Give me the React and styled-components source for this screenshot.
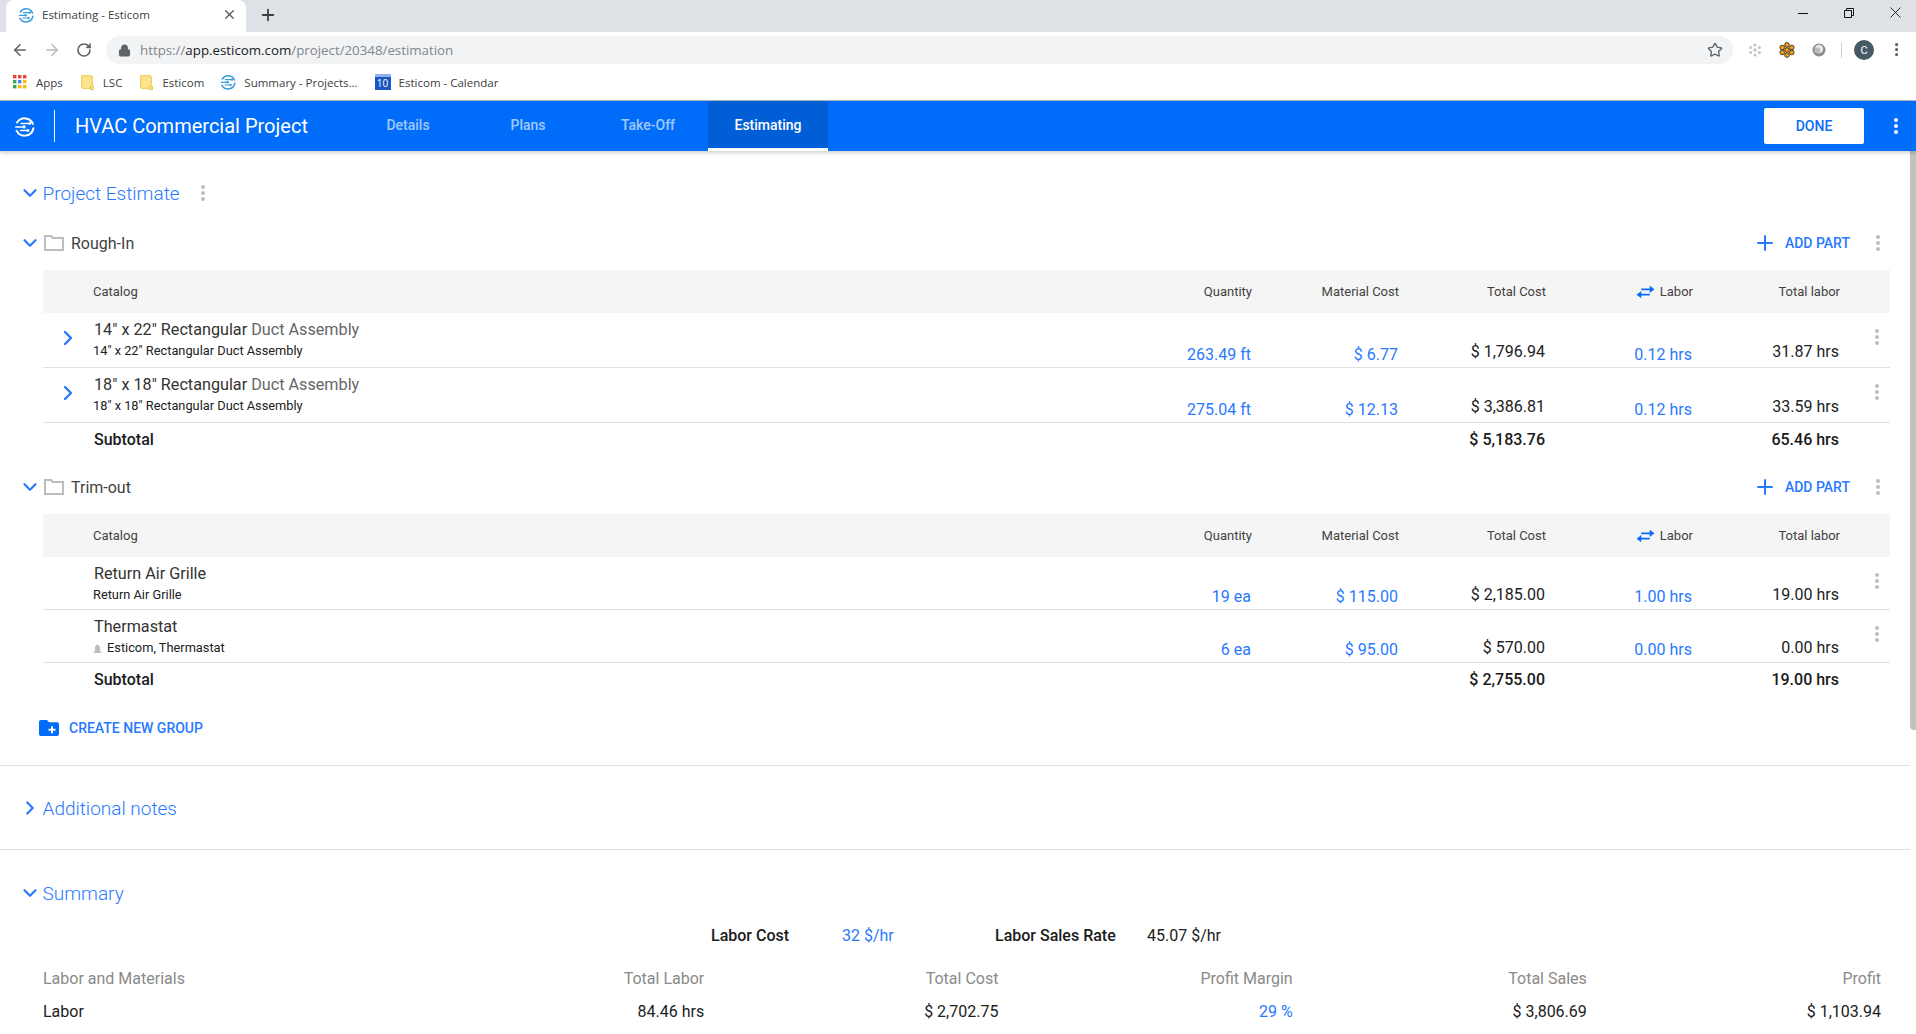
import React from 'react';
import styled, { createGlobalStyle } from 'styled-components';
import { ArrowLeft, ArrowRight, ChevronDown, ChevronRight, Lock, Plus, RotateCw, Star, X } from 'lucide-react';

const BLUE = '#2979ff';

const GlobalStyle = createGlobalStyle`
  html, body {
    margin: 0;
    padding: 0;
    height: 100%;
    overflow: hidden;
    background: #fff;
    font-family: Roboto, "Liberation Sans", sans-serif;
  }
  * { box-sizing: border-box; }
`;

const Page = styled.div`
  width: 1916px;
  height: 1034px;
  display: flex;
  flex-direction: column;
  overflow: hidden;
`;

/* browser chrome */
const TabStrip = styled.div`
  height: 32px;
  flex: none;
  background: #dee1e6;
  display: flex;
  padding-left: 6px;
`;

const BrowserTab = styled.div`
  width: 240px;
  background: #fff;
  border-radius: 8px 8px 0 0;
  display: flex;
  align-items: center;
  padding: 0 9px 3px 12px;
  gap: 8px;
  font-family: "Open Sans", sans-serif;
  font-size: 11.5px;
  color: #3c4043;
`;

const TabTitle = styled.span`
  flex: 1;
`;

const NewTab = styled.div`
  width: 44px;
  display: flex;
  align-items: center;
  justify-content: center;
  padding-bottom: 3px;
  color: #3c4043;
`;

const WindowControls = styled.div`
  margin-left: auto;
  margin-right: -2px;
  display: flex;
`;

const WindowButton = styled.div`
  width: 46px;
  display: flex;
  align-items: center;
  justify-content: center;
  height: 25px;
`;

const Toolbar = styled.div`
  height: 36px;
  flex: none;
  display: flex;
  align-items: center;
  padding-left: 4px;
`;

const NavButton = styled.div`
  width: 32px;
  display: flex;
  justify-content: center;
  color: ${p => (p.$off ? '#b9bbbe' : '#5f6368')};
`;

const Omnibox = styled.div`
  width: 1627px;
  height: 28px;
  margin-left: 6px;
  border-radius: 14px;
  background: #f1f3f4;
  display: flex;
  align-items: center;
  padding: 0 10px 0 12px;
  color: #5f6368;
  font-family: "Open Sans", sans-serif;
  font-size: 13.3px;
`;

const Url = styled.span`
  margin-left: 9px;
  flex: 1;
  color: #80868b;
  b { font-weight: 400; color: #202124; }
`;

const ExtSlot = styled.div`
  width: 32px;
  display: flex;
  justify-content: center;
`;

const Extensions = styled.div`
  margin-left: 6px;
  display: flex;
  align-items: center;
`;

const ToolbarRule = styled.div`
  width: 1px;
  height: 16px;
  background: #cfd1d4;
  margin: 0 12px 0 6px;
`;

const Avatar = styled.div`
  width: 20px;
  height: 20px;
  border-radius: 50%;
  background: #455a64;
  color: #fff;
  font-size: 11px;
  display: flex;
  align-items: center;
  justify-content: center;
  margin-right: 21px;
`;

const Bookmarks = styled.div`
  height: 33px;
  flex: none;
  display: flex;
  align-items: center;
  padding: 0 0 4px 13px;
  border-bottom: 1px solid #b4b6b8;
  font-family: "Open Sans", sans-serif;
  font-size: 11.5px;
  color: #3c4043;
`;

const Bookmark = styled.div`
  display: flex;
  align-items: center;
  gap: ${p => p.$gap || 9}px;
  margin-right: ${p => p.$after || 18}px;
`;

const CalendarIcon = styled.div`
  width: 16px;
  height: 16px;
  background: #1a56c4;
  border-top: 3px solid #8fb0ea;
  color: #fff;
  font-size: 10px;
  line-height: 13px;
  text-align: center;
`;

/* app bar */
const AppBar = styled.header`
  height: 50px;
  flex: none;
  background: #006cfa;
  display: flex;
  align-items: stretch;
  padding: 0 18px 0 14px;
  box-shadow: 0 2px 4px rgba(0, 0, 0, 0.18);
  position: relative;
  z-index: 1;
`;

const LogoSlot = styled.div`
  display: flex;
  align-items: center;
`;

const BarRule = styled.div`
  width: 1px;
  height: 32px;
  background: #fff;
  align-self: center;
  margin: 0 20px 0 19px;
`;

const ProjectName = styled.div`
  flex: 0 0 273px;
  align-self: center;
  color: #fff;
  font-size: 20px;
  font-weight: 400;
  white-space: nowrap;
`;

const NavTab = styled.div`
  width: 120px;
  display: flex;
  align-items: center;
  justify-content: center;
  font-size: 14px;
  font-weight: 500;
  color: ${p => (p.$active ? '#fff' : 'rgba(255, 255, 255, 0.65)')};
  background: ${p => (p.$active ? '#005ed6' : 'transparent')};
  border-bottom: 3px solid ${p => (p.$active ? '#fff' : 'transparent')};
  padding-top: 1px;
`;

const DoneButton = styled.button`
  margin: 7px 30px 7px auto;
  width: 100px;
  border: none;
  border-radius: 2px;
  background: #fff;
  color: #0a6cf5;
  font-family: inherit;
  font-size: 14px;
  font-weight: 500;
`;

const KebabSlot = styled.div`
  display: flex;
  align-items: center;
`;

/* page body */
const Body = styled.div`
  flex: 1;
  display: flex;
  min-height: 0;
`;

const Main = styled.main`
  width: 1910px;
  overflow: hidden;
`;

const ScrollTrack = styled.div`
  width: 6px;
`;

const ScrollThumb = styled.div`
  height: 579px;
  background: #c1c1c1;
  border-radius: 0 0 0 4px;
`;

const SectionHead = styled.div`
  height: 40px;
  display: flex;
  align-items: center;
  padding-left: 19px;
  color: ${BLUE};
`;

const SectionTitle = styled.h2`
  margin: 0 21px 0 1.5px;
  font-size: 19px;
  font-weight: 300;
`;

const Estimate = styled.section`
  padding-top: 22px;
`;

const Group = styled.div`
  margin-top: ${p => p.$first ? 10 : 12}px;
`;

const GroupHead = styled.div`
  height: 40px;
  margin-bottom: 7px;
  display: flex;
  align-items: center;
  padding: 0 30px 0 19px;
`;

const ChevronSlot = styled.div`
  width: 22px;
  display: flex;
  color: ${BLUE};
`;

const FolderSlot = styled.div`
  margin: 0 7px 0 3px;
  display: flex;
`;

const GroupName = styled.span`
  font-size: 16px;
  color: #424242;
`;

const AddPart = styled.div`
  margin-left: auto;
  margin-right: 26px;
  display: flex;
  align-items: center;
  gap: 8px;
  color: ${BLUE};
  font-size: 14px;
  font-weight: 500;
`;

const Table = styled.div`
  margin: 0 20px 0 43px;
`;

const columns = 'grid-template-columns: 50px 1fr repeat(5, 147px) 50px;';

const TableHead = styled.div`
  display: grid;
  ${columns}
  height: 43px;
  background: #f5f5f5;
  align-items: center;
  font-size: 13px;
  color: #424242;
`;

const HeadCell = styled.div`
  display: flex;
  justify-content: ${p => (p.$left ? 'flex-start' : 'flex-end')};
  align-items: center;
  gap: 5px;
  white-space: nowrap;
`;

const Row = styled.div`
  display: grid;
  ${columns}
  height: ${p => p.$height}px;
  border-bottom: 1px solid #e0e0e0;
`;

const ExpandCell = styled.div`
  display: flex;
  justify-content: center;
  padding-top: 13px;
  color: ${BLUE};
`;

const NameCell = styled.div`
  padding-top: 7px;
`;

const PartName = styled.div`
  padding-left: 1px;
  font-size: 16.2px;
  line-height: 20px;
  color: #333;
`;

const Faded = styled.span`
  color: #666;
`;

const PartCode = styled.div`
  margin-top: 3px;
  font-size: 12.8px;
  line-height: 16px;
  color: #212121;
  display: flex;
  align-items: center;
  gap: 5px;
`;

const ValueCell = styled.div`
  align-self: end;
  text-align: right;
  font-size: 16px;
  line-height: 20px;
  padding-right: 1px;
  padding-bottom: ${p => p.$bottom}px;
  color: ${p => (p.$link ? BLUE : '#212121')};
`;

const RowMenu = styled.div`
  display: flex;
  justify-content: flex-end;
  padding: 16px 11px 0 0;
`;

const SubtotalRow = styled.div`
  display: grid;
  ${columns}
  height: 32px;
  align-items: center;
  font-size: 16px;
  font-weight: 500;
  color: #1a1a1a;
`;

const SubtotalLabel = styled.div`
  grid-column: 2;
  padding-left: 1px;
`;

const SubtotalValue = styled.div`
  grid-column: ${p => p.$col};
  text-align: right;
  padding-right: 1px;
`;

const CreateGroup = styled.div`
  margin: 17px 0 21px 39px;
  height: 32px;
  display: flex;
  align-items: center;
  gap: 10px;
  color: ${BLUE};
  font-size: 14px;
  font-weight: 500;
`;

const Rule = styled.hr`
  margin: 0;
  border: none;
  height: 1px;
  background: #e0e0e0;
`;

const Notes = styled.section`
  padding: 22px 0 21px;
`;

const Summary = styled.section`
  padding-top: 23px;
`;

const RateRow = styled.div`
  margin: 13px 0 23px 711px;
  display: flex;
  font-size: 16px;
  line-height: 20px;
`;

const RateLabel = styled.span`
  font-weight: 500;
  color: #1a1a1a;
  width: ${p => p.$width}px;
`;

const RateValue = styled.span`
  color: ${p => (p.$link ? BLUE : '#212121')};
  width: ${p => p.$width}px;
`;

const SummaryGrid = styled.div`
  margin: 0 29px 0 43px;
  display: grid;
  grid-template-columns: 1fr repeat(5, 294.2px);
  row-gap: 13px;
  font-size: 16px;
  line-height: 20px;
`;

const SummaryHead = styled.div`
  color: #8a8a8a;
  text-align: ${p => (p.$left ? 'left' : 'right')};
`;

const SummaryCell = styled.div`
  color: ${p => (p.$link ? BLUE : '#212121')};
  text-align: ${p => (p.$left ? 'left' : 'right')};
`;

/* drawings */
const EsticomLogo = ({ size = 16, color = '#3a9bdc' }) => (
  <svg width={size} height={size} viewBox="0 0 24 24" fill="none" stroke={color} strokeWidth="2.3" strokeLinecap="round">
    <path d="M3.5 7.5A10.3 10.3 0 0 1 21.7 9" />
    <path d="M22.2 14A10.3 10.3 0 0 1 3 17" />
    <path d="M8 8.5h9M2 12.5h9M7.5 16.5h8" strokeWidth="1.8" />
    <circle cx="18" cy="8.5" r="1.7" fill={color} stroke="none" />
    <circle cx="11.5" cy="12.5" r="1.9" fill={color} stroke="none" />
    <circle cx="16" cy="16.5" r="1.7" fill={color} stroke="none" />
  </svg>
);

const Kebab = ({ color = '#bdbdbd', r = 2, step = 6 }) => (
  <svg width={r * 2} height={step * 2 + r * 2} viewBox={`0 0 ${r * 2} ${step * 2 + r * 2}`} fill={color}>
    <circle cx={r} cy={r} r={r} />
    <circle cx={r} cy={r + step} r={r} />
    <circle cx={r} cy={r + step * 2} r={r} />
  </svg>
);

const AppsIcon = () => {
  const colors = ['#ea4335', '#ea4335', '#ea4335', '#34a853', '#4285f4', '#fbbc05', '#34a853', '#fbbc05', '#fbbc05'];
  return (
    <svg width="14" height="14" viewBox="0 0 14 14">
      {colors.map((c, i) => (
        <rect key={i} x={(i % 3) * 5} y={Math.floor(i / 3) * 5} width="3.4" height="3.4" fill={c} />
      ))}
    </svg>
  );
};

const BookmarkFolder = () => (
  <svg width="13" height="15" viewBox="0 0 13 15">
    <path d="M.7.7h9.6c.6 0 1 .4 1 1v11.6H1.7c-.6 0-1-.4-1-1z" fill="#fde58f" stroke="#eec549" strokeWidth="1" />
    <path d="M9.5 11.5h3v3h-3z" fill="#fde58f" stroke="#eec549" strokeWidth="1" />
  </svg>
);

const SnowExt = () => (
  <svg width="16" height="16" viewBox="0 0 16 16" fill="#c4c7ca">
    <circle cx="8" cy="8" r="1.8" />
    <circle cx="8" cy="3" r="1.6" />
    <circle cx="8" cy="13" r="1.6" />
    <circle cx="3.6" cy="5.5" r="1.6" />
    <circle cx="12.4" cy="5.5" r="1.6" />
    <circle cx="3.6" cy="10.5" r="1.6" />
    <circle cx="12.4" cy="10.5" r="1.6" />
  </svg>
);

const FlowerExt = () => (
  <svg width="16" height="16" viewBox="0 0 16 16" fill="#f6a21e" stroke="#3a2a10" strokeWidth=".9">
    <circle cx="8" cy="8" r="2.3" />
    <circle cx="8" cy="2.9" r="2.3" />
    <circle cx="8" cy="13.1" r="2.3" />
    <circle cx="3.2" cy="5.5" r="2.3" />
    <circle cx="12.8" cy="5.5" r="2.3" />
    <circle cx="3.2" cy="10.5" r="2.3" />
    <circle cx="12.8" cy="10.5" r="2.3" />
  </svg>
);

const BallExt = () => (
  <svg width="14" height="14" viewBox="0 0 14 14">
    <circle cx="7" cy="7" r="6.5" fill="#8a8c8e" />
    <circle cx="7" cy="6" r="4.2" fill="#e9e9e9" />
    <circle cx="5.2" cy="7.5" r="3" fill="#bbb" />
  </svg>
);

const Minimize = () => (
  <svg width="10" height="10" viewBox="0 0 10 10"><path d="M0 5.5h10" stroke="#111" /></svg>
);

const Restore = () => (
  <svg width="10" height="10" viewBox="0 0 10 10" fill="none" stroke="#111">
    <path d="M.5 2.5h7v7h-7zM2.5 2.5v-2h7v7h-2" />
  </svg>
);

const CloseWin = () => (
  <svg width="11" height="11" viewBox="0 0 11 11" stroke="#111" strokeWidth=".9"><path d="M.5.5l10 10M10.5.5l-10 10" /></svg>
);

const FolderOutline = () => (
  <svg width="20" height="16" viewBox="0 0 20 16" fill="none" stroke="#bdbdbd" strokeWidth="2">
    <path d="M1 1h6.2l1.6 2H19v12H1z" />
  </svg>
);

const FolderPlus = () => (
  <svg width="20" height="16" viewBox="0 0 20 16">
    <path d="M2 0h6l2 2.2h8a2 2 0 0 1 2 2V14a2 2 0 0 1-2 2H2a2 2 0 0 1-2-2V2a2 2 0 0 1 2-2z" fill="#006cfa" />
    <path d="M13 6.2v7M9.5 9.7h7" stroke="#fff" strokeWidth="2" />
  </svg>
);

const SwapIcon = () => (
  <svg width="19" height="14" viewBox="0 0 18 13" fill="#0a6cf5">
    <path d="M5 3.2h8V.5L17.5 4 13 7.5V4.8H5z" />
    <path d="M13 8.2H5V5.5L.5 9 5 12.5V9.8h8z" />
  </svg>
);

const BrandDot = () => (
  <svg width="9" height="9" viewBox="0 0 9 9" fill="#bdbdbd"><path d="M4.5 0L7 3v4l2 2H0l2-2V3z" /></svg>
);

const groups = [
  {
    name: 'Rough-In',
    rowHeight: 55,
    totalBottom: 5,
    subtotal: ['$ 5,183.76', '65.46 hrs'],
    rows: [
      { title: '14" x 22" Rectangular', fade: ' Duct Assembly', code: '14" x 22" Rectangular Duct Assembly', qty: '263.49 ft', material: '$ 6.77', total: '$ 1,796.94', labor: '0.12 hrs', totalLabor: '31.87 hrs', expand: true },
      { title: '18" x 18" Rectangular', fade: ' Duct Assembly', code: '18" x 18" Rectangular Duct Assembly', qty: '275.04 ft', material: '$ 12.13', total: '$ 3,386.81', labor: '0.12 hrs', totalLabor: '33.59 hrs', expand: true },
    ],
  },
  {
    name: 'Trim-out',
    rowHeight: 53,
    totalBottom: 4,
    subtotal: ['$ 2,755.00', '19.00 hrs'],
    rows: [
      { title: 'Return Air Grille', code: 'Return Air Grille', qty: '19 ea', material: '$ 115.00', total: '$ 2,185.00', labor: '1.00 hrs', totalLabor: '19.00 hrs' },
      { title: 'Thermastat', code: 'Esticom, Thermastat', brand: true, qty: '6 ea', material: '$ 95.00', total: '$ 570.00', labor: '0.00 hrs', totalLabor: '0.00 hrs' },
    ],
  },
];

const summaryHead = ['Labor and Materials', 'Total Labor', 'Total Cost', 'Profit Margin', 'Total Sales', 'Profit'];

const PartRow = ({ row, height, totalBottom }) => (
  <Row $height={height}>
    <ExpandCell>{row.expand && <ChevronRight size={24} strokeWidth={2.4} />}</ExpandCell>
    <NameCell>
      <PartName>{row.title}{row.fade && <Faded>{row.fade}</Faded>}</PartName>
      <PartCode>{row.brand && <BrandDot />}{row.code}</PartCode>
    </NameCell>
    <ValueCell $link $bottom={2}>{row.qty}</ValueCell>
    <ValueCell $link $bottom={2}>{row.material}</ValueCell>
    <ValueCell $bottom={totalBottom}>{row.total}</ValueCell>
    <ValueCell $link $bottom={2}>{row.labor}</ValueCell>
    <ValueCell $bottom={totalBottom}>{row.totalLabor}</ValueCell>
    <RowMenu><Kebab /></RowMenu>
  </Row>
);

const PartGroup = ({ group, first }) => (
  <Group $first={first}>
    <GroupHead>
      <ChevronSlot><ChevronDown size={22} strokeWidth={2.4} /></ChevronSlot>
      <FolderSlot><FolderOutline /></FolderSlot>
      <GroupName>{group.name}</GroupName>
      <AddPart><Plus size={24} strokeWidth={2} />ADD PART</AddPart>
      <KebabSlot><Kebab /></KebabSlot>
    </GroupHead>
    <Table>
      <TableHead>
        <span />
        <HeadCell $left>Catalog</HeadCell>
        <HeadCell>Quantity</HeadCell>
        <HeadCell>Material Cost</HeadCell>
        <HeadCell>Total Cost</HeadCell>
        <HeadCell><SwapIcon />Labor</HeadCell>
        <HeadCell>Total labor</HeadCell>
      </TableHead>
      {group.rows.map(row => (
        <PartRow key={row.title} row={row} height={group.rowHeight} totalBottom={group.totalBottom} />
      ))}
      <SubtotalRow>
        <SubtotalLabel>Subtotal</SubtotalLabel>
        <SubtotalValue $col={5}>{group.subtotal[0]}</SubtotalValue>
        <SubtotalValue $col={7}>{group.subtotal[1]}</SubtotalValue>
      </SubtotalRow>
    </Table>
  </Group>
);

const App = () => (
  <Page>
    <GlobalStyle />
    <TabStrip>
      <BrowserTab>
        <EsticomLogo />
        <TabTitle>Estimating - Esticom</TabTitle>
        <X size={15} strokeWidth={2.4} color="#5f6368" />
      </BrowserTab>
      <NewTab><Plus size={18} strokeWidth={2.4} /></NewTab>
      <WindowControls>
        <WindowButton><Minimize /></WindowButton>
        <WindowButton><Restore /></WindowButton>
        <WindowButton><CloseWin /></WindowButton>
      </WindowControls>
    </TabStrip>
    <Toolbar>
      <NavButton><ArrowLeft size={18} strokeWidth={2.2} /></NavButton>
      <NavButton $off><ArrowRight size={18} strokeWidth={2.2} /></NavButton>
      <NavButton><RotateCw size={16} strokeWidth={2.4} /></NavButton>
      <Omnibox>
        <Lock size={13} strokeWidth={2.4} fill="#5f6368" />
        <Url>https://<b>app.esticom.com</b>/project/20348/estimation</Url>
        <Star size={16} strokeWidth={2} />
      </Omnibox>
      <Extensions>
        <ExtSlot><SnowExt /></ExtSlot>
        <ExtSlot><FlowerExt /></ExtSlot>
        <ExtSlot><BallExt /></ExtSlot>
        <ToolbarRule />
        <Avatar>C</Avatar>
        <Kebab color="#5f6368" r={1.6} step={5} />
      </Extensions>
    </Toolbar>
    <Bookmarks>
      <Bookmark $after={18}><AppsIcon />Apps</Bookmark>
      <Bookmark $after={18}><BookmarkFolder />LSC</Bookmark>
      <Bookmark $after={16}><BookmarkFolder />Esticom</Bookmark>
      <Bookmark $gap={8} $after={17}><EsticomLogo />Summary - Projects...</Bookmark>
      <Bookmark $gap={8}><CalendarIcon>10</CalendarIcon>Esticom - Calendar</Bookmark>
    </Bookmarks>
    <AppBar>
      <LogoSlot><EsticomLogo size={21} color="#fff" /></LogoSlot>
      <BarRule />
      <ProjectName>HVAC Commercial Project</ProjectName>
      <NavTab>Details</NavTab>
      <NavTab>Plans</NavTab>
      <NavTab>Take-Off</NavTab>
      <NavTab $active>Estimating</NavTab>
      <DoneButton>DONE</DoneButton>
      <KebabSlot><Kebab color="#fff" /></KebabSlot>
    </AppBar>
    <Body>
      <Main>
        <Estimate>
          <SectionHead>
            <ChevronDown size={22} strokeWidth={2.4} />
            <SectionTitle>Project Estimate</SectionTitle>
            <Kebab />
          </SectionHead>
          {groups.map((g, i) => <PartGroup key={g.name} group={g} first={i === 0} />)}
          <CreateGroup><FolderPlus />CREATE NEW GROUP</CreateGroup>
        </Estimate>
        <Rule />
        <Notes>
          <SectionHead>
            <ChevronRight size={22} strokeWidth={2.4} />
            <SectionTitle>Additional notes</SectionTitle>
          </SectionHead>
        </Notes>
        <Rule />
        <Summary>
          <SectionHead>
            <ChevronDown size={22} strokeWidth={2.4} />
            <SectionTitle>Summary</SectionTitle>
          </SectionHead>
          <RateRow>
            <RateLabel $width={131}>Labor Cost</RateLabel>
            <RateValue $link $width={153}>32 $/hr</RateValue>
            <RateLabel $width={152}>Labor Sales Rate</RateLabel>
            <RateValue $width={100}>45.07 $/hr</RateValue>
          </RateRow>
          <SummaryGrid>
            {summaryHead.map((h, i) => <SummaryHead key={h} $left={i === 0}>{h}</SummaryHead>)}
            <SummaryCell $left>Labor</SummaryCell>
            <SummaryCell>84.46 hrs</SummaryCell>
            <SummaryCell>$ 2,702.75</SummaryCell>
            <SummaryCell $link>29 %</SummaryCell>
            <SummaryCell>$ 3,806.69</SummaryCell>
            <SummaryCell>$ 1,103.94</SummaryCell>
          </SummaryGrid>
        </Summary>
      </Main>
      <ScrollTrack><ScrollThumb /></ScrollTrack>
    </Body>
  </Page>
);

export default App;
